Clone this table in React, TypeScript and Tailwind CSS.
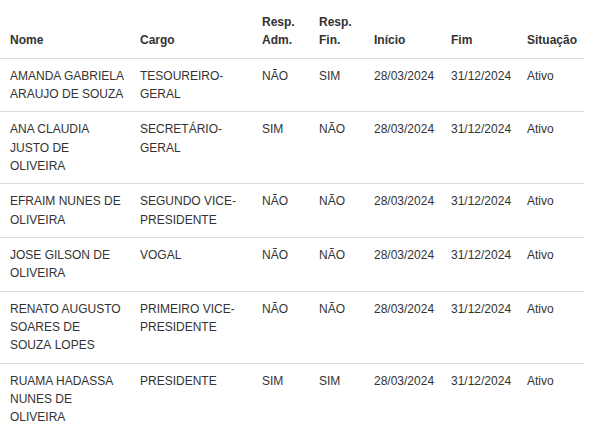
import React from "react";

type Membro = {
  nome: string;
  cargo: string;
  respAdm: string;
  respFin: string;
  inicio: string;
  fim: string;
  situacao: string;
};

const membros: Membro[] = [
  { nome: "AMANDA GABRIELA ARAUJO DE SOUZA", cargo: "TESOUREIRO-GERAL", respAdm: "NÃO", respFin: "SIM", inicio: "28/03/2024", fim: "31/12/2024", situacao: "Ativo" },
  { nome: "ANA CLAUDIA JUSTO DE OLIVEIRA", cargo: "SECRETÁRIO-GERAL", respAdm: "SIM", respFin: "NÃO", inicio: "28/03/2024", fim: "31/12/2024", situacao: "Ativo" },
  { nome: "EFRAIM NUNES DE OLIVEIRA", cargo: "SEGUNDO VICE-PRESIDENTE", respAdm: "NÃO", respFin: "NÃO", inicio: "28/03/2024", fim: "31/12/2024", situacao: "Ativo" },
  { nome: "JOSE GILSON DE OLIVEIRA", cargo: "VOGAL", respAdm: "NÃO", respFin: "NÃO", inicio: "28/03/2024", fim: "31/12/2024", situacao: "Ativo" },
  // nbsp keeps "SOUZA LOPES" together, like the original wrap
  { nome: "RENATO AUGUSTO SOARES DE SOUZA\u00a0LOPES", cargo: "PRIMEIRO VICE-PRESIDENTE", respAdm: "NÃO", respFin: "NÃO", inicio: "28/03/2024", fim: "31/12/2024", situacao: "Ativo" },
  { nome: "RUAMA HADASSA NUNES DE OLIVEIRA", cargo: "PRESIDENTE", respAdm: "SIM", respFin: "SIM", inicio: "28/03/2024", fim: "31/12/2024", situacao: "Ativo" },
];

const th = "pl-[10px] pr-1 pt-[13px] pb-2 text-left align-bottom font-bold border-b border-[#dddddd]";
const td = "pl-[10px] pr-1 py-2 align-top";

export default function App() {
  return (
    <div className="w-[596px] h-[444px] bg-white overflow-hidden">
      <table
        className="table-fixed border-collapse w-[584px] text-[12px] leading-[18.33px] text-[#333333]"
        style={{ fontFamily: '"Liberation Sans", Arial, sans-serif' }}
      >
        <colgroup>
          <col className="w-[130px]" />
          <col className="w-[122px]" />
          <col className="w-[57px]" />
          <col className="w-[55px]" />
          <col className="w-[77px]" />
          <col className="w-[76px]" />
          <col className="w-[67px]" />
        </colgroup>
        <thead>
          <tr>
            <th className={th}>Nome</th>
            <th className={th}>Cargo</th>
            <th className={th}>Resp. Adm.</th>
            <th className={th}>Resp. Fin.</th>
            <th className={th}>Início</th>
            <th className={th}>Fim</th>
            <th className={th}>Situação</th>
          </tr>
        </thead>
        <tbody className="divide-y divide-[#dddddd]">
          {membros.map((m) => (
            <tr key={m.nome}>
              <td className={td}>{m.nome}</td>
              <td className={td}>{m.cargo}</td>
              <td className={td}>{m.respAdm}</td>
              <td className={td}>{m.respFin}</td>
              <td className={td}>{m.inicio}</td>
              <td className={td}>{m.fim}</td>
              <td className={td}>{m.situacao}</td>
            </tr>
          ))}
        </tbody>
      </table>
    </div>
  );
}
